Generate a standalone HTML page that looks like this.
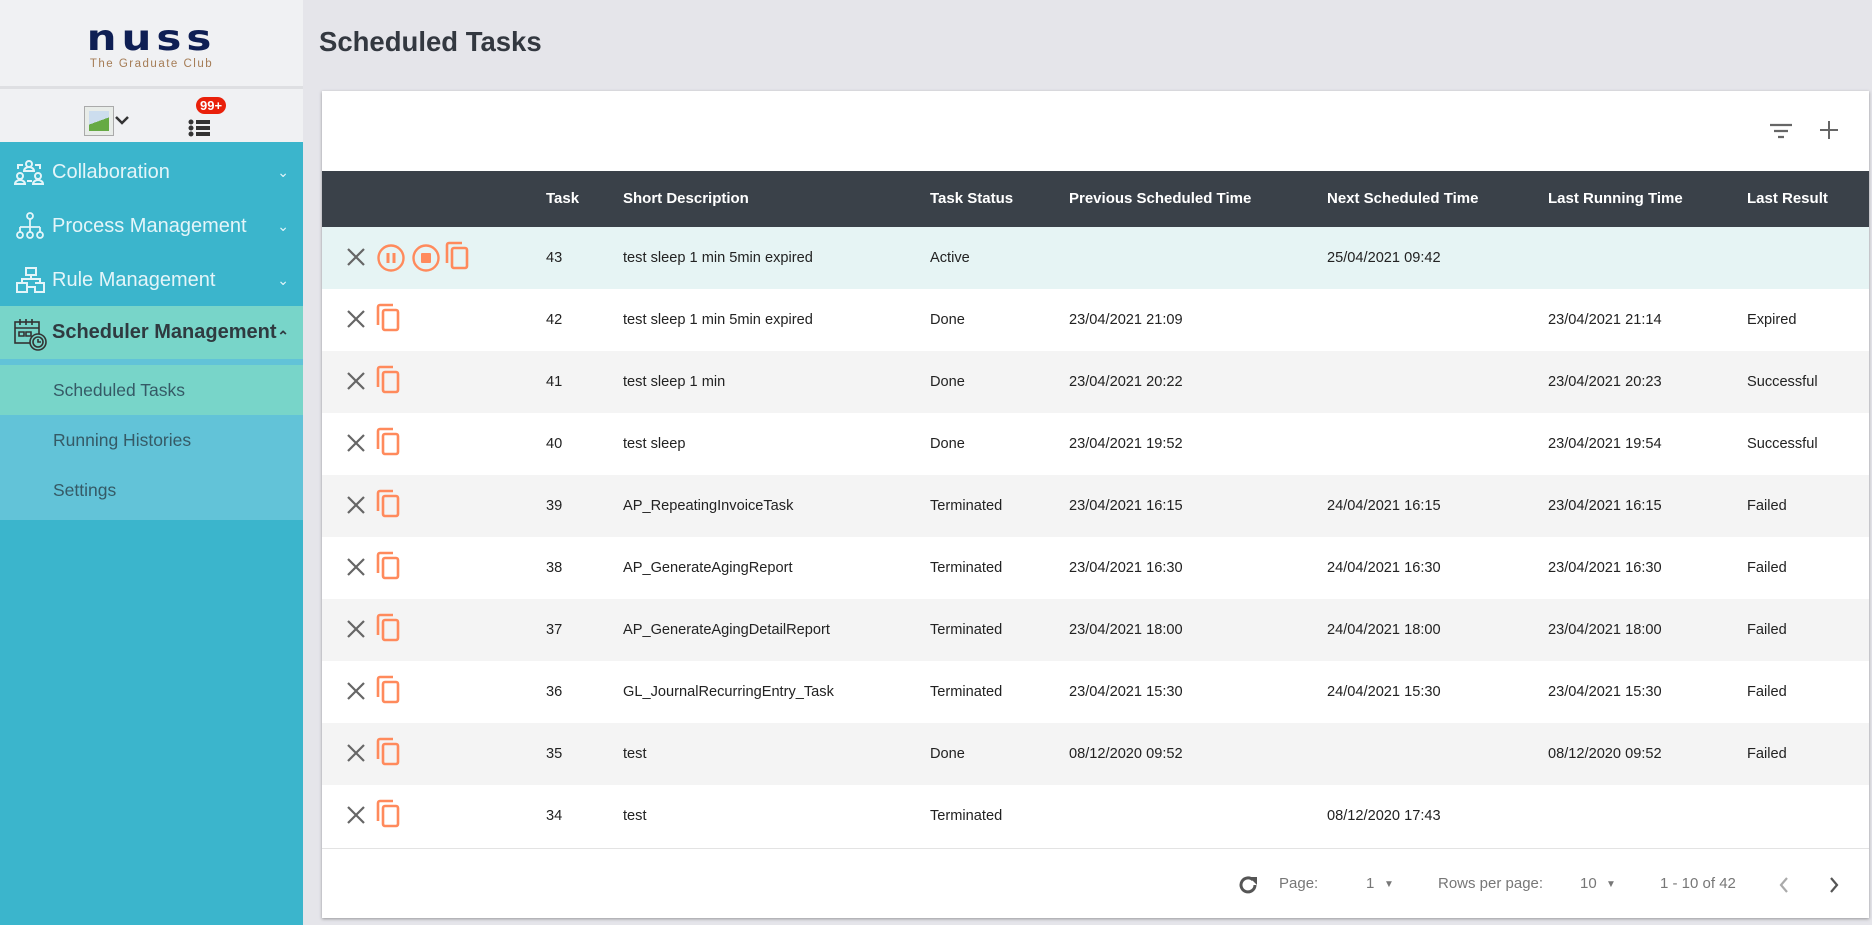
<!DOCTYPE html>
<html><head><meta charset="utf-8"><style>
*{box-sizing:border-box;margin:0;padding:0}
body{width:1872px;height:925px;overflow:hidden;background:#e5e5ea;font-family:"Liberation Sans",sans-serif;position:relative}
#sb{position:absolute;left:0;top:0;width:303px;height:925px;background:#3bb5cc}
.logo{height:86px;background:#f0f1f3;text-align:center;padding-top:22px}
.logo .n{font-size:42px;font-weight:bold;color:#0f1f54;letter-spacing:5px;line-height:32px;font-family:"DejaVu Sans",sans-serif;transform:scaleY(0.85)}
.logo .g{font-size:11.5px;color:#a57c55;letter-spacing:1.5px;margin-top:4px}
.sep{height:3px;background:#dedfe2}
.icons{height:53px;background:#f0f1f3;position:relative}
.nav{position:absolute;left:0;width:303px;height:53px;color:#e4f5f9;font-size:20px;line-height:53px;padding-left:52px}
.nav .ch{position:absolute;right:14px;top:0;font-size:14px}
.sub{position:absolute;left:0;width:303px;height:50px;line-height:50px;padding-left:53px;font-size:17.5px;color:#355a66}
#main .title{position:absolute;left:319px;top:26px;font-size:27.5px;font-weight:bold;color:#333840}
#card{position:absolute;left:322px;top:91px;width:1547px;height:827px;background:#fff;box-shadow:0 1px 3px rgba(0,0,0,.35)}
.hd{position:absolute;left:0;top:80px;width:1547px;height:56px;background:#3a4149;color:#fff;font-weight:bold;font-size:15px}
.hd span,.row span{position:absolute;top:0}
.hd span{line-height:56px}
.row{position:absolute;left:0;width:1547px;height:62px;font-size:14.6px;color:#222}
.row span{line-height:62px}
.row svg{position:absolute}
.ft{position:absolute;top:757px;left:0;width:1547px;height:70px;border-top:1px solid #e3e3e3;font-size:15px;color:#777}
.ft span{position:absolute;top:26px}
</style></head><body>
<div id="sb">
<div class="logo"><div class="n">nuss</div><div class="g">The Graduate Club</div></div>
<div class="sep"></div>
<div class="icons">
<div style="position:absolute;left:84px;top:17px;width:30px;height:30px;border:1px solid #aaa;background:#e8ece8"><div style="position:absolute;left:4px;top:4px;width:20px;height:20px;background:linear-gradient(160deg,#cde 50%,#6a4 50%)"></div></div>
<svg style="position:absolute;left:114px;top:24px" width="16" height="14"><path d="M2 4l6 6 6-6" stroke="#333" stroke-width="2.5" fill="none"/></svg>
<svg style="position:absolute;left:188px;top:18px" width="26" height="30"><circle cx="3" cy="15" r="2.5" fill="#333"/><circle cx="3" cy="21" r="2.5" fill="#333"/><circle cx="3" cy="27" r="2.5" fill="#333"/><rect x="8" y="13" width="14" height="4" fill="#333"/><rect x="8" y="19" width="14" height="4" fill="#333"/><rect x="8" y="25" width="14" height="4" fill="#333"/></svg>
<div style="position:absolute;left:196px;top:8px;background:#e9200a;color:#fff;font-size:13px;font-weight:bold;border-radius:10px;padding:1px 4px;line-height:15px">99+</div>
</div>
<div class="nav" style="top:146px"><svg style="position:absolute;left:14px;top:14px" width="30" height="26" fill="none" stroke="#e4f5f9" stroke-width="2"><circle cx="15" cy="4" r="3"/><path d="M10 11a5 4 0 0110 0z"/><circle cx="6" cy="16" r="3"/><path d="M1 24a5 4 0 0110 0z"/><circle cx="24" cy="16" r="3"/><path d="M19 24a5 4 0 0110 0z"/><path d="M4 9V5h5M21 5h5v4M13 21h5"/></svg>Collaboration<span class="ch">&#8964;</span></div>
<div class="nav" style="top:200px"><svg style="position:absolute;left:16px;top:12px" width="28" height="28" fill="none" stroke="#e4f5f9" stroke-width="1.8"><circle cx="14" cy="4" r="3"/><path d="M14 7v8M4 15h20M4 15v5M14 15v5M24 15v5"/><circle cx="4" cy="23" r="3"/><circle cx="14" cy="23" r="3"/><circle cx="24" cy="23" r="3"/></svg>Process Management<span class="ch">&#8964;</span></div>
<div class="nav" style="top:254px"><svg style="position:absolute;left:16px;top:12px" width="30" height="28" fill="none" stroke="#e4f5f9" stroke-width="2"><path d="M10 2h10v7H10zM1 17h10v9H1zM11 21h8v5h9v-9H19M15 9v4H6v4M15 13h9v4"/></svg>Rule Management<span class="ch">&#8964;</span></div>
<div class="nav" style="top:306px;background:#78d5c9;color:#2f3a40;font-weight:bold"><svg style="position:absolute;left:14px;top:12px" width="34" height="34" fill="none" stroke="#333" stroke-width="1.6"><rect x="1" y="4" width="24" height="21"/><path d="M6 1v6M12 1v6M18 1v6M1 10h24M5 14h5v4H5zM12 14h5v4h-5z"/><circle cx="24" cy="24" r="8" fill="#78d5c9"/><circle cx="24" cy="24" r="5"/><path d="M24 21v3h3"/></svg>Scheduler Management<span class="ch" style="top:4px">&#8963;</span></div>
<div style="position:absolute;top:359px;left:0;width:303px;height:161px;background:#62c3d8"></div>
<div class="sub" style="top:365px;background:#78d5c9">Scheduled Tasks</div>
<div class="sub" style="top:415px">Running Histories</div>
<div class="sub" style="top:465px">Settings</div>
</div>
<div id="main"><div class="title">Scheduled Tasks</div></div>
<div id="card">
<svg style="position:absolute;left:1446px;top:30px" width="26" height="20"><path d="M2 4h22M6 10h14M10 16h6" stroke="#666" stroke-width="2.2"/></svg>
<svg style="position:absolute;left:1496px;top:28px" width="22" height="22"><path d="M11 2v18M2 11h18" stroke="#666" stroke-width="2"/></svg>
<div class="hd"><span style="left:224px">Task</span><span style="left:301px">Short Description</span><span style="left:608px">Task Status</span><span style="left:747px">Previous Scheduled Time</span><span style="left:1005px">Next Scheduled Time</span><span style="left:1226px">Last Running Time</span><span style="left:1425px">Last Result</span></div>
<div id="rows"></div>
<div class="ft">
<svg style="position:absolute;left:914px;top:24px" width="24" height="24"><path d="M19 12a7 7 0 11-2-5" stroke="#555" stroke-width="3" fill="none"/><path d="M13 4h8v8z" fill="#555"/></svg>
<span style="left:957px">Page:</span><span style="left:1044px">1</span><span style="left:1062px;font-size:10px;top:30px">&#9660;</span>
<span style="left:1116px">Rows per page:</span><span style="left:1258px">10</span><span style="left:1284px;font-size:10px;top:30px">&#9660;</span>
<span style="left:1338px">1 - 10 of 42</span>
<svg style="position:absolute;left:1455px;top:27px" width="14" height="18"><path d="M10 2L4 9l6 7" stroke="#aaa" stroke-width="2.2" fill="none"/></svg>
<svg style="position:absolute;left:1505px;top:27px" width="14" height="18"><path d="M4 2l6 7-6 7" stroke="#555" stroke-width="2.2" fill="none"/></svg>
</div>
</div>
<script>
var d=[["43","test sleep 1 min 5min expired","Active","","25/04/2021 09:42","",""],
["42","test sleep 1 min 5min expired","Done","23/04/2021 21:09","","23/04/2021 21:14","Expired"],
["41","test sleep 1 min","Done","23/04/2021 20:22","","23/04/2021 20:23","Successful"],
["40","test sleep","Done","23/04/2021 19:52","","23/04/2021 19:54","Successful"],
["39","AP_RepeatingInvoiceTask","Terminated","23/04/2021 16:15","24/04/2021 16:15","23/04/2021 16:15","Failed"],
["38","AP_GenerateAgingReport","Terminated","23/04/2021 16:30","24/04/2021 16:30","23/04/2021 16:30","Failed"],
["37","AP_GenerateAgingDetailReport","Terminated","23/04/2021 18:00","24/04/2021 18:00","23/04/2021 18:00","Failed"],
["36","GL_JournalRecurringEntry_Task","Terminated","23/04/2021 15:30","24/04/2021 15:30","23/04/2021 15:30","Failed"],
["35","test","Done","08/12/2020 09:52","","08/12/2020 09:52","Failed"],
["34","test","Terminated","","08/12/2020 17:43","",""]];
var L=[224,301,608,747,1005,1226,1425],h="";
var X='<svg style="left:24px;top:20px" width="20" height="20"><path d="M2 2l16 16M18 2L2 18" stroke="#666" stroke-width="2.2"/></svg>';
function cp(x){return '<svg style="left:'+x+'px;top:14px" width="26" height="30" fill="none" stroke="#ff8a5c" stroke-width="2.6"><path d="M3 22V4a2 2 0 012-2h13"/><rect x="8" y="7" width="15" height="20" rx="2"/></svg>';}
d.forEach(function(r,i){
var bg=i==0?"#e6f4f4":(i%2?"#fff":"#f4f4f4");
h+='<div class="row" style="top:'+(136+i*62)+'px;background:'+bg+'">'+X;
if(i==0){h+='<svg style="left:54px;top:16px" width="30" height="30" fill="none" stroke="#ff8a5c" stroke-width="2.4"><circle cx="15" cy="15" r="12.5"/><path d="M12 10v10M18 10v10" stroke-width="3"/></svg><svg style="left:89px;top:16px" width="30" height="30" fill="none" stroke="#ff8a5c" stroke-width="2.4"><circle cx="15" cy="15" r="12.5"/><rect x="10" y="10" width="10" height="10" fill="#ff8a5c" stroke="none" rx="1"/></svg>'+cp(122);}
else h+=cp(53);
r.forEach(function(c,j){h+='<span style="left:'+L[j]+'px">'+c+'</span>';});
h+='</div>';});
document.getElementById("rows").innerHTML=h;
</script>
</body></html>
